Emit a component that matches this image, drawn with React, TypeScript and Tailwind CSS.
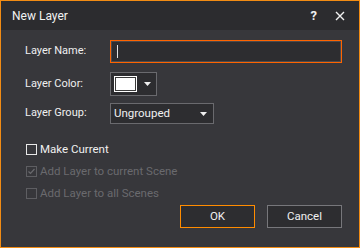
import { useState } from 'react';

function Check({ label, checked, disabled, onChange }: { label: string; checked: boolean; disabled?: boolean; onChange?: () => void }) {
  return (
    <label className={`flex items-center h-[15px] text-[11.5px] ${disabled ? 'text-[#6a6a6e]' : 'text-[#f0f0f0]'}`} onClick={disabled ? undefined : onChange}>
      <span className={`w-[11px] h-[11px] border flex items-center justify-center ${disabled ? 'border-[#5e5e62]' : 'border-[#e8e8e8]'}`}>
        {checked && (
          <svg width="9" height="9" viewBox="0 0 9 9">
            <path d="M1.5 4.5 L3.5 6.5 L7.5 2" fill="none" stroke="currentColor" strokeWidth="1.2" />
          </svg>
        )}
      </span>
      <span className="ml-[3px]">{label}</span>
    </label>
  );
}

function Arrow() {
  return (
    <svg width="7" height="4" viewBox="0 0 7 4">
      <path d="M0 0 H7 L3.5 4 Z" fill="#f0f0f0" />
    </svg>
  );
}

export default function App() {
  const [name, setName] = useState('');
  const [makeCurrent, setMakeCurrent] = useState(false);

  return (
    <div className="w-[360px] h-[248px] border border-[#f28c14] bg-[#37373b] flex flex-col text-[11px] text-[#f0f0f0]" style={{ fontFamily: 'Roboto, "Liberation Sans", sans-serif' }}>
      <div className="h-[29px] bg-[#2c2c2f] flex items-center pl-[11px] pr-[14px] shrink-0">
        <span className="text-[12px] text-[#f2f2f2]">New Layer</span>
        <span className="ml-auto font-bold text-[13px] mr-[18px]">?</span>
        <svg width="10" height="10" viewBox="0 0 10 10">
          <path d="M1 1 L9 9 M9 1 L1 9" stroke="#f2f2f2" strokeWidth="1.4" />
        </svg>
      </div>

      <div className="flex-1 flex flex-col pl-[24px] pr-[17px] pt-[10px]">
        <div className="flex items-center h-[23px]">
          <span className="w-[85px]">Layer Name:</span>
          <div className="relative flex-1 h-[23px] border border-[#ff6400] bg-[#2d2d30] shadow-[inset_0_0_0_1px_#4a4a4e] flex items-center pl-[6px]">
            <input value={name} onChange={(e) => setName(e.target.value)} className="w-full bg-transparent outline-none text-[#f0f0f0] caret-[#f0f0f0]" />
            <span className="absolute left-[6px] top-[4px] w-[1px] h-[13px] bg-[#e0e0e0]" />
          </div>
        </div>

        <div className="flex items-center h-[24px] mt-[9px]">
          <span className="w-[85px]">Layer Color:</span>
          <div className="w-[47px] h-[24px] border border-[#6a6a6e] bg-[#2d2d30] flex items-center pl-[3px]">
            <div className="w-[23px] h-[16px] bg-white border border-white shadow-[inset_0_0_0_1px_#3a3a3a]" />
            <div className="ml-[7px]"><Arrow /></div>
          </div>
        </div>

        <div className="flex items-center h-[21px] mt-[7px]">
          <span className="w-[85px]">Layer Group:</span>
          <div className="w-[104px] h-[21px] border border-[#6a6a6e] bg-[#2d2d30] flex items-center pl-[3px] pr-[6px]">
            <span className="text-[11.5px]">Ungrouped</span>
            <div className="ml-auto"><Arrow /></div>
          </div>
        </div>

        <div className="flex flex-col gap-[7px] mt-[18px] pl-[1px]">
          <Check label="Make Current" checked={makeCurrent} onChange={() => setMakeCurrent(!makeCurrent)} />
          <Check label="Add Layer to current Scene" checked disabled />
          <Check label="Add Layer to all Scenes" checked={false} disabled />
        </div>

        <div className="flex justify-end gap-[12px] mt-[4px]">
          <button className="w-[75px] h-[23px] border border-[#ff8c00] bg-[#2d2d30] text-[#f0f0f0] text-[11.5px]">OK</button>
          <button className="w-[75px] h-[23px] border border-[#77777b] bg-[#2d2d30] text-[#f0f0f0] text-[11.5px]">Cancel</button>
        </div>
      </div>
    </div>
  );
}
